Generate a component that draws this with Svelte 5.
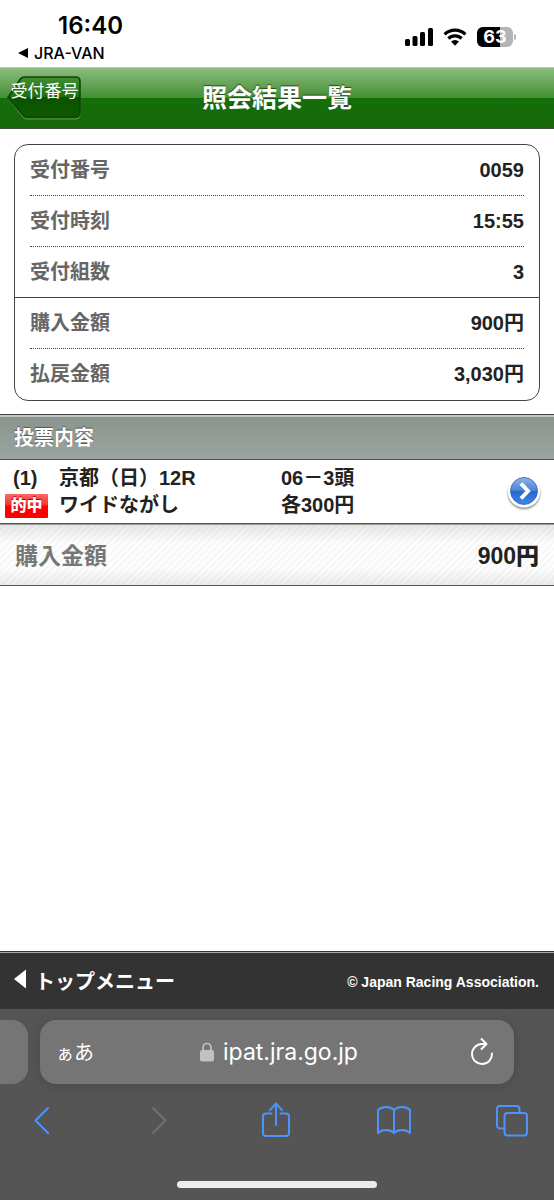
<script>
  let receipt = [
    { label: '受付番号', value: '0059' },
    { label: '受付時刻', value: '15:55' },
    { label: '受付組数', value: '3', last: true },
    { label: '購入金額', value: '900円' },
    { label: '払戻金額', value: '3,030円', last: true }
  ];

  let bets = [
    {
      no: 1,
      race: '京都（日）12R',
      type: 'ワイドながし',
      horses: '06－3頭',
      unit: '各300円',
      hit: true
    }
  ];

  let total = '900円';
  let battery = 63;
</script>

<div class="screen">
  <div class="status">
    <div class="status__left">
      <span class="time">16:40</span>
      <a class="return" href="#jra-van">
        <svg width="11" height="10" viewBox="0 0 11 10"><path d="M0 5 10 0v10z" fill="#000" /></svg>
        JRA-VAN
      </a>
    </div>
    <div class="status__right">
      <svg width="28" height="18" viewBox="0 0 28 18" aria-hidden="true">
        <rect x="0" y="11" width="5" height="7" rx="1.5" />
        <rect x="7.5" y="8" width="5" height="10" rx="1.5" />
        <rect x="15" y="4" width="5" height="14" rx="1.5" />
        <rect x="23" y="0" width="5" height="18" rx="1.5" />
      </svg>
      <svg width="24" height="18" viewBox="0 0 24 18" aria-hidden="true">
        <path d="M1.6 6.3a15 15 0 0 1 20.8 0M5.4 10.5a9.5 9.5 0 0 1 13.2 0" fill="none" stroke="#000" stroke-width="3.2" />
        <path d="M8 13.6a5.8 5.8 0 0 1 8 0L12 17.8z" />
      </svg>
      <div class="battery">
        <div class="battery__body">
          <div class="battery__fill" style="width: {battery}%"></div>
          <span>{battery}</span>
        </div>
        <div class="battery__cap"></div>
      </div>
    </div>
  </div>

  <header class="header">
    <a class="back" href="#back">
      <svg width="75" height="44" viewBox="0 0 75 44" aria-hidden="true">
        <defs>
          <linearGradient id="backfill" x1="0" y1="0" x2="0" y2="1">
            <stop offset="0" stop-color="#438c33" />
            <stop offset=".5" stop-color="#1f6f10" />
            <stop offset=".51" stop-color="#0b5200" />
            <stop offset="1" stop-color="#0d5b01" />
          </linearGradient>
        </defs>
        <path d="M17 2.500H69a4 4 0 0 1 4 4V39a4 4 0 0 1-4 4H20q-3 0-5-3L1.500 23 13 5q1.500-2.500 4-2.500z" fill="none" stroke="#7fb572" stroke-opacity=".7" />
        <path d="M17 1H69a4 4 0 0 1 4 4V37a4 4 0 0 1-4 4H20q-3 0-5-3L1 21.500 13 3.500Q14.500 1 17 1z" fill="url(#backfill)" stroke="#0f4506" stroke-width="1.600" />
      </svg>
      <span>受付番号</span>
    </a>
    <h1>照会結果一覧</h1>
  </header>

  <main>
    <dl class="card">
      {#each receipt as row}
        <div class="card__row" class:card__row--last={row.last}>
          <dt>{row.label}</dt>
          <dd>{row.value}</dd>
        </div>
      {/each}
    </dl>

    <h2>投票内容</h2>

    {#each bets as bet}
      <a class="bet" href="#bet-{bet.no}">
        <span class="bet__no">({bet.no})</span>
        <span>{bet.race}</span>
        <span>{bet.horses}</span>
        <span class="bet__hit">{#if bet.hit}<b>的中</b>{/if}</span>
        <span>{bet.type}</span>
        <span>{bet.unit}</span>
        <svg class="bet__go" width="36" height="38" viewBox="0 0 36 38" aria-hidden="true">
          <defs>
            <linearGradient id="ball" x1="0" y1="0" x2="0" y2="1">
              <stop offset="0" stop-color="#8fb3e6" />
              <stop offset=".48" stop-color="#4c83d8" />
              <stop offset=".52" stop-color="#2a66cf" />
              <stop offset="1" stop-color="#3f86ee" />
            </linearGradient>
          </defs>
          <circle cx="18" cy="20" r="17.500" fill="#000" opacity=".12" />
          <circle cx="18" cy="19.500" r="16.500" fill="#000" opacity=".28" />
          <circle cx="18" cy="18" r="16.500" fill="#fff" />
          <circle cx="18" cy="18" r="13.500" fill="url(#ball)" stroke="#3266b8" stroke-width=".8" />
          <path d="M15 10.500l7 7.500-7 7.500" fill="none" stroke="#fff" stroke-width="4" />
        </svg>
      </a>
    {/each}

    <div class="total">
      <span>購入金額</span>
      <strong>{total}</strong>
    </div>
  </main>

  <footer class="footer">
    <a href="#top">
      <svg width="12" height="20" viewBox="0 0 12 20" aria-hidden="true"><path d="M0 10 12 0.500v19z" fill="#fff" /></svg>
      トップメニュー
    </a>
    <small>© Japan Racing Association.</small>
  </footer>

  <div class="browser">
    <div class="tabs">
      <div class="tabs__prev"></div>
      <div class="address">
        <button class="reader" aria-label="ページ設定"><span>ぁ</span>あ</button>
        <button class="url">
          <svg width="14" height="20" viewBox="0 0 14 20" aria-hidden="true">
            <rect x="0" y="8" width="14" height="11.500" rx="2" fill="#c0c0c6" />
            <path d="M3 9V5.500a4 4 0 0 1 8 0V9" fill="none" stroke="#c0c0c6" stroke-width="1.700" />
          </svg>
          ipat.jra.go.jp
        </button>
        <button aria-label="再読み込み">
          <svg width="24" height="28" viewBox="0 0 24 28" fill="none" stroke="#fff" stroke-width="1.900" stroke-linecap="round" stroke-linejoin="round">
            <path d="M22 15.500A10 10 0 1 1 12 6h4.500M11.500 1l5 5-5 5" />
          </svg>
        </button>
      </div>
    </div>

    <nav class="toolbar">
      <button aria-label="戻る">
        <svg width="32" height="36" viewBox="0 0 32 36"><path d="M22 6 9.500 18.500 22 31" /></svg>
      </button>
      <button aria-label="進む" disabled>
        <svg width="32" height="36" viewBox="0 0 32 36"><path d="M10 6l12.500 12.500L10 31" /></svg>
      </button>
      <button aria-label="共有">
        <svg width="32" height="36" viewBox="0 0 32 36">
          <path d="M11.500 11.500H6a3 3 0 0 0-3 3V31a3 3 0 0 0 3 3h20a3 3 0 0 0 3-3V14.500a3 3 0 0 0-3-3h-5.500M16 23V2M10 8l6-6.500L22 8" />
        </svg>
      </button>
      <button aria-label="ブックマーク">
        <svg width="34" height="36" viewBox="0 0 34 36">
          <path d="M17 8v23M17 8q-3-3-8-3T1 8v23q3-3 8-3t8 3q3-3 8-3t8 3V8q-3-3-8-3t-8 3z" />
        </svg>
      </button>
      <button aria-label="タブ">
        <svg width="32" height="36" viewBox="0 0 32 36">
          <rect x="8.500" y="11" width="22.500" height="22.500" rx="3" />
          <path d="M8.500 26.500H4a3 3 0 0 1-3-3V7a3 3 0 0 1 3-3h16.500a3 3 0 0 1 3 3v4" />
        </svg>
      </button>
    </nav>
    <div class="home"></div>
  </div>
</div>

<style>
  :global(body) {
    margin: 0;
    background: #fff;
  }

  .screen {
    display: flex;
    flex-direction: column;
    min-height: 100vh;
    font-family: 'Liberation Sans', 'Noto Sans CJK JP', sans-serif;
    font-size: 20px;
    line-height: 27px;
    color: #222;
  }

  a {
    color: inherit;
    text-decoration: none;
  }

  button {
    display: flex;
    align-items: center;
    padding: 0;
    border: 0;
    background: none;
    color: inherit;
    font: inherit;
  }

  svg {
    display: block;
    flex: none;
  }

  /* status bar */
  .status {
    display: flex;
    justify-content: space-between;
    height: 67px;
    padding: 0 38px 0 18px;
    box-sizing: border-box;
    color: #000;
    font-family: Inter, sans-serif;
  }

  .status__left {
    display: flex;
    flex-direction: column;
    padding-top: 12px;
  }

  .time {
    padding-left: 40px;
    font-size: 24px;
    line-height: 28px;
    font-weight: 600;
  }

  .return {
    display: flex;
    align-items: center;
    gap: 5px;
    font-size: 16px;
    line-height: 26px;
    font-weight: 500;
  }

  .status__right {
    display: flex;
    align-items: center;
    gap: 10px;
    padding-top: 6px;
  }

  .battery {
    display: flex;
    align-items: center;
    gap: 1px;
  }

  .battery__body {
    position: relative;
    width: 36px;
    height: 20px;
    border-radius: 6px;
    background: #b4b4b4;
    overflow: hidden;
  }

  .battery__fill {
    height: 100%;
    background: #000;
  }

  .battery__body span {
    position: absolute;
    inset: 0;
    color: #fff;
    font-size: 18px;
    line-height: 20px;
    font-weight: 700;
    text-align: center;
  }

  .battery__cap {
    width: 2px;
    height: 6px;
    border-radius: 0 2px 2px 0;
    background: #b4b4b4;
  }

  /* page header */
  .header {
    display: grid;
    grid-template-columns: 1fr auto 1fr;
    align-items: center;
    height: 62px;
    box-sizing: border-box;
    padding: 0 7px;
    border-top: 1px solid #b5d3ae;
    border-bottom: 1px solid #3f4f3c;
    background: linear-gradient(#8cbd80, #448f33 50%, #14700a 50%, #176608);
    color: #fff;
  }

  .back {
    position: relative;
    width: 75px;
    height: 44px;
    font-size: 17px;
    line-height: 31px;
    text-align: center;
    white-space: nowrap;
  }

  .back span {
    position: absolute;
    inset: 0;
  }

  h1 {
    margin: 0;
    font-size: 25px;
    line-height: 36px;
    font-weight: 700;
    text-shadow: 0 -1px 1px #24451c;
  }

  /* receipt */
  .card {
    margin: 15px 14px 13px;
    padding-bottom: 1px;
    border: 1px solid #444;
    border-radius: 14px;
    font-weight: 700;
  }

  .card__row {
    display: flex;
    justify-content: space-between;
    align-items: center;
    height: 50px;
    margin: 0 15px;
    border-bottom: 1px dotted #444;
  }

  .card__row--last {
    margin: 0;
    padding: 0 15px;
    border-bottom: 1px solid #444;
  }

  .card__row:last-child {
    border-bottom: 0;
  }

  dt {
    color: #666;
  }

  dd {
    margin: 0;
  }

  /* bets */
  h2 {
    margin: 0;
    padding: 10px 14px 7px;
    border-top: 1px solid #444;
    border-bottom: 1px solid #4c504e;
    background: linear-gradient(#8a938d, #9ba59f);
    box-shadow: inset 0 2px #c4c8c5;
    color: #fff;
    font-size: 20px;
    font-weight: 700;
    text-shadow: 0 -1px 1px #555;
  }

  .bet {
    display: grid;
    grid-template-columns: 54px 222px 1fr 36px;
    align-items: center;
    padding: 5px 12px 4px 5px;
    border-bottom: 1px solid #555;
    font-weight: 700;
  }

  .bet__no {
    padding-left: 8px;
  }

  .bet__hit b {
    display: block;
    width: 43px;
    border-radius: 1px;
    background: linear-gradient(#ff6a6a, #fa3030 45%, #f00 50%, #f00);
    color: #fff;
    font-size: 16px;
    line-height: 24px;
    text-align: center;
    text-shadow: 0 -1px 1px #a00;
  }

  .bet__go {
    grid-column: 4;
    grid-row: 1 / 3;
  }

  .total {
    display: flex;
    justify-content: space-between;
    padding: 16px 15px 13px;
    border-top: 1px solid #999;
    border-bottom: 1px solid #555;
    background:
      linear-gradient(rgba(0, 0, 0, 0.09), transparent 30%, transparent 70%, rgba(0, 0, 0, 0.07)),
      repeating-linear-gradient(135deg, #fff 0 2px, #f8f8f8 2px 5px);
    font-size: 23px;
    line-height: 31px;
    font-weight: 700;
  }

  .total span {
    color: #777;
  }

  /* footer */
  .footer {
    display: flex;
    justify-content: space-between;
    align-items: center;
    height: 58px;
    box-sizing: border-box;
    margin-top: auto;
    padding: 4px 15px 0 14px;
    border-top: 1px solid #333;
    box-shadow: inset 0 1px #aaa;
    background: #333;
    color: #fff;
    font-weight: 700;
  }

  .footer a {
    display: flex;
    align-items: baseline;
    gap: 9px;
  }

  small {
    font-size: 14px;
  }

  /* browser chrome */
  .browser {
    padding: 11px 0 12px;
    background: #555;
    color: #fff;
  }

  .tabs {
    display: flex;
    gap: 12px;
    padding-right: 40px;
  }

  .tabs__prev {
    width: 28px;
    border-radius: 0 16px 16px 0;
    background: #757575;
  }

  .address {
    display: grid;
    grid-template-columns: 1fr auto 1fr;
    align-items: center;
    flex: 1;
    height: 64px;
    padding: 0 20px 0 16px;
    border-radius: 16px;
    background: #757575;
    box-shadow: 0 2px 12px rgba(0, 0, 0, 0.15);
  }

  .address button:last-child {
    justify-self: end;
  }

  .reader {
    align-items: baseline;
    font-family: 'Noto Sans CJK JP', sans-serif;
  }

  .reader span {
    font-size: 18px;
  }

  .url {
    gap: 9px;
    padding-left: 8px;
    font-family: Inter, sans-serif;
    font-size: 23px;
  }

  .toolbar {
    display: flex;
    justify-content: space-between;
    padding: 18px 26px 43px;
  }

  .toolbar svg {
    fill: none;
    stroke: #4e94f8;
    stroke-width: 2;
    stroke-linecap: round;
    stroke-linejoin: round;
  }

  .toolbar button:disabled svg {
    stroke: #717171;
  }

  .home {
    width: 36%;
    height: 7px;
    margin: 0 auto;
    border-radius: 4px;
    background: #ececec;
  }
</style>
